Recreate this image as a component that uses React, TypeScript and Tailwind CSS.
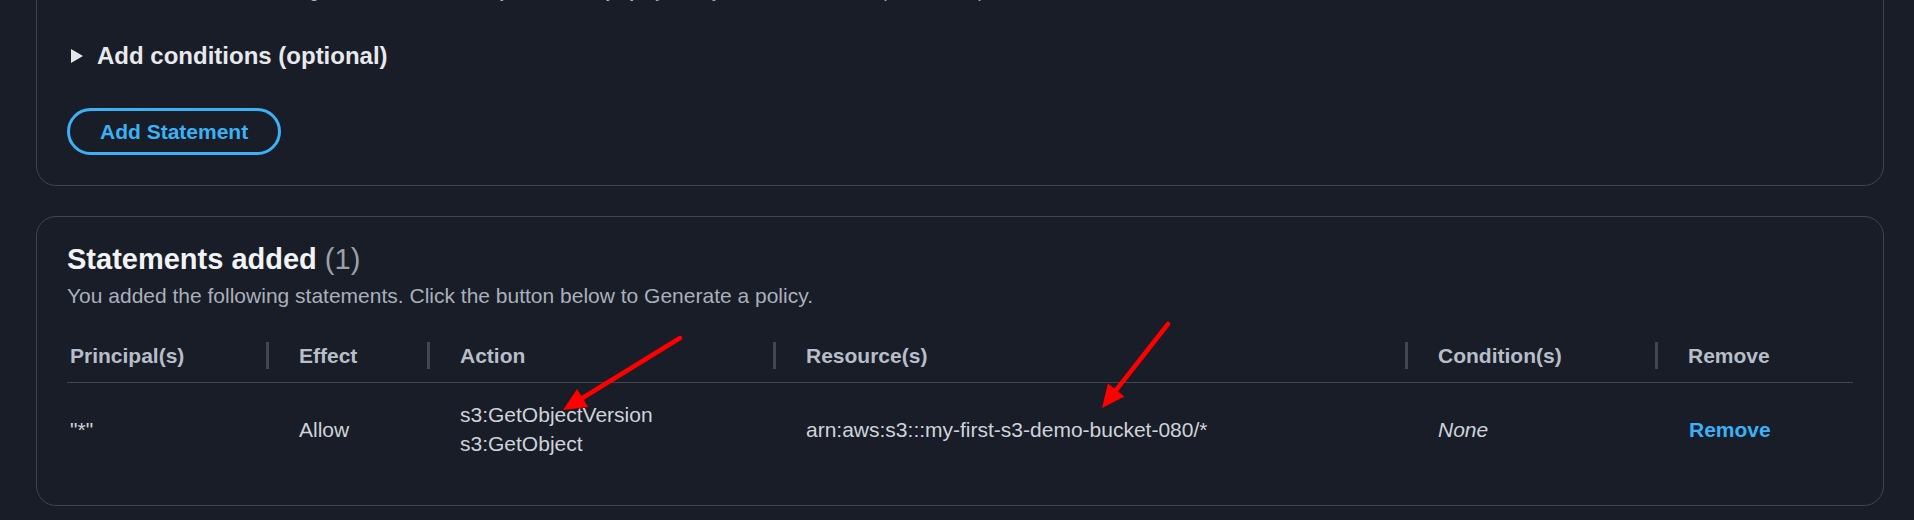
import React from "react";

const cols = "grid grid-cols-[199px_161px_346px_632px_250px_198px]";

function HeadCell({ label, first }: { label: string; first?: boolean }) {
  return (
    <div className="flex items-center h-[27px]">
      {!first && <div className="w-[3px] h-[27px] bg-[#41464f]" />}
      <span className={first ? "ml-[3px] leading-[27px]" : "ml-[30px] leading-[27px]"}>{label}</span>
    </div>
  );
}

function Arrow({ x1, y1, x2, y2 }: { x1: number; y1: number; x2: number; y2: number }) {
  const dx = x2 - x1;
  const dy = y2 - y1;
  const len = Math.hypot(dx, dy);
  const ux = dx / len;
  const uy = dy / len;
  const hl = 23;
  const hw = 10.5;
  const bx = x2 - ux * hl;
  const by = y2 - uy * hl;
  const px = -uy;
  const py = ux;
  const pts = `${x2},${y2} ${bx + px * hw},${by + py * hw} ${bx - px * hw},${by - py * hw}`;
  return (
    <g>
      <line x1={x1} y1={y1} x2={bx + ux * 3} y2={by + uy * 3} stroke="#ff0000" strokeWidth={4.5} strokeLinecap="round" />
      <polygon points={pts} fill="#ff0000" />
    </g>
  );
}

export default function App() {
  return (
    <div className="relative h-[520px] w-[1914px] overflow-hidden bg-[#181d28] font-['Liberation_Sans',Arial,sans-serif]">
      {/* policy form card (top cut off) */}
      <div className="-mt-[56px] ml-[36px] w-[1848px] rounded-[20px] border border-[#3f4450] px-[30px] pt-[30px] pb-[30px]">
        <p className="mt-[1px] text-[18px] leading-[30px] text-[#aab0ba] whitespace-nowrap">
          {"ARN should follow the following format: arn:aws:s3:::${BucketName}/${KeyName}. Use a comma to separate multiple values."}
        </p>
        <div className="mt-[35px] flex items-center h-[30px]">
          <svg width="12" height="14" viewBox="0 0 12 14" className="ml-[4px]">
            <polygon points="0,0 12,7 0,14" fill="#e4e6ea" />
          </svg>
          <span className="ml-[14px] text-[24px] font-bold leading-[30px] text-[#e7e9ec]">Add conditions (optional)</span>
        </div>
        <button className="mt-[37px] flex h-[47px] items-center rounded-full border-[3px] border-[#3cb1f5] px-[30px] text-[21px] font-bold text-[#3cb1f5]">
          Add Statement
        </button>
      </div>

      {/* statements added */}
      <div className="mt-[30px] ml-[36px] w-[1848px] rounded-[20px] border border-[#3f4450] px-[30px] pt-[24px] pb-[30px]">
        <h2 className="text-[29px] leading-[36px] font-bold text-[#f1f3f5]">
          Statements added <span className="font-normal text-[#9ba1aa]">(1)</span>
        </h2>
        <p className="mt-[4px] text-[21px] leading-[30px] text-[#aab0ba]">
          You added the following statements. Click the button below to Generate a policy.
        </p>

        <div className={`${cols} mt-[31px] pb-[13px] border-b border-[#41464f] text-[21px] font-bold text-[#b8bec8]`}>
          <HeadCell label="Principal(s)" first />
          <HeadCell label="Effect" />
          <HeadCell label="Action" />
          <HeadCell label="Resource(s)" />
          <HeadCell label="Condition(s)" />
          <HeadCell label="Remove" />
        </div>

        <div className={`${cols} items-center py-[17px] text-[21px] leading-[29px] text-[#cfd3da]`}>
          <div className="pl-[3px]">"*"</div>
          <div className="pl-[33px]">Allow</div>
          <div className="pl-[33px]">
            <div>s3:GetObjectVersion</div>
            <div>s3:GetObject</div>
          </div>
          <div className="pl-[33px]">arn:aws:s3:::my-first-s3-demo-bucket-080/*</div>
          <div className="pl-[33px] italic">None</div>
          <div className="pl-[34px] font-bold text-[#3cb1f5]">Remove</div>
        </div>
      </div>

      {/* annotation arrows */}
      <svg className="pointer-events-none absolute left-0 top-0" width="1914" height="520">
        <Arrow x1={680} y1={338} x2={563} y2={410} />
        <Arrow x1={1168} y1={324} x2={1102} y2={408} />
      </svg>
    </div>
  );
}
